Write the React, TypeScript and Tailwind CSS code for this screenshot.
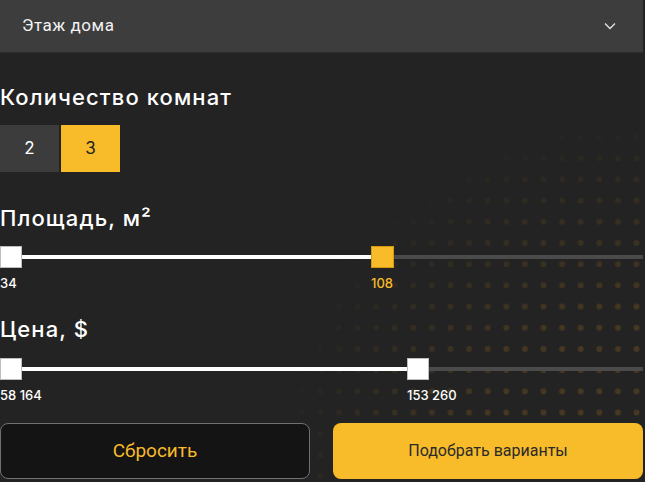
import { useState } from "react";

const rooms = ["2", "3"];

const TRACK = 621; // usable length for the thumb's left edge

type SliderProps = {
  value: number; // 0..1 position of the upper thumb
  fromLabel: string;
  toLabel: string;
  accent?: boolean;
};

function RangeSlider({ value, fromLabel, toLabel, accent }: SliderProps) {
  const left = Math.round(value * TRACK);

  return (
    <div className="flex flex-col gap-[7px]">
      <div className="flex h-[22px] items-center">
        <div className="h-[22px] w-[22px] shrink-0 border border-[#bdbdbd] bg-white" />
        <div className="h-[4px] bg-white" style={{ width: left - 22 }} />
        <div
          className={
            accent
              ? "h-[22px] w-[23px] shrink-0 border border-[#d49a12] bg-[#f8bb2a]"
              : "h-[22px] w-[22px] shrink-0 border border-[#bdbdbd] bg-white"
          }
        />
        <div className="h-[4px] flex-1 bg-[#4a4a4a]" />
      </div>
      <div className="flex font-medium text-[13px] leading-[16px]">
        <span className="shrink-0 text-white" style={{ width: left }}>
          {fromLabel}
        </span>
        <span className={accent ? "text-[#f8bb2a]" : "text-white"}>
          {toLabel}
        </span>
      </div>
    </div>
  );
}

function DotField() {
  return (
    <svg
      className="pointer-events-none absolute inset-0 h-[482px] w-[645px]"
      height="482"
      width="645"
    >
      <defs>
        <pattern
          height="21.2"
          id="dots"
          patternUnits="userSpaceOnUse"
          width="18.6"
          x="627.2"
          y="105.1"
        >
          <circle cx="9.3" cy="10.6" fill="#483921" r="3" />
        </pattern>
        <radialGradient
          cx="645"
          cy="482"
          gradientUnits="userSpaceOnUse"
          id="fade"
          r="400"
        >
          <stop offset="0" stopColor="#fff" stopOpacity="1" />
          <stop offset="0.45" stopColor="#fff" stopOpacity="0.9" />
          <stop offset="0.95" stopColor="#fff" stopOpacity="0" />
        </radialGradient>
        <mask id="fadeMask">
          <rect fill="url(#fade)" height="482" width="645" />
        </mask>
      </defs>
      <rect
        fill="url(#dots)"
        height="482"
        mask="url(#fadeMask)"
        width="645"
        y="60"
      />
    </svg>
  );
}

export default function App() {
  const [room, setRoom] = useState("3");

  return (
    <div className="relative h-[482px] w-[645px] overflow-hidden bg-[#232323] font-['Inter',sans-serif]">
      <DotField />
      <div className="relative flex w-[643px] flex-col">
        <div className="flex h-[53px] items-center justify-between border-[#2b2b2b] border-b bg-[#3d3d3d] pr-[27px] pl-[22px]">
          <span className="font-['Roboto',sans-serif] text-[#f2f2f2] text-[17px] tracking-[0.03em]">
            Этаж дома
          </span>
          <svg fill="none" height="8" viewBox="0 0 12 8" width="12">
            <polyline
              points="1,1.5 6,6.5 11,1.5"
              stroke="#e5e5e5"
              strokeWidth="1.3"
            />
          </svg>
        </div>

        <div className="flex flex-col gap-[14px] pt-[30px]">
          <h2 className="font-medium text-[22px] text-white leading-[28px] tracking-[0.05em]">
            Количество комнат
          </h2>
          <div className="flex gap-[2px]">
            {rooms.map((r) => (
              <button
                className={
                  r === room
                    ? "flex h-[47px] w-[59px] items-center justify-center bg-[#f8bb2a] text-[#222] text-[17px]"
                    : "flex h-[47px] w-[59px] items-center justify-center bg-[#3c3c3c] text-[17px] text-white"
                }
                key={r}
                onClick={() => setRoom(r)}
                type="button"
              >
                {r}
              </button>
            ))}
          </div>
        </div>

        <div className="flex flex-col gap-[14px] pt-[32px]">
          <h2 className="font-medium text-[22px] text-white leading-[28px] tracking-[0.05em]">
            Площадь, м²
          </h2>
          <RangeSlider accent fromLabel="34" toLabel="108" value={0.5974} />
        </div>

        <div className="flex flex-col gap-[15px] pt-[24px]">
          <h2 className="font-medium text-[22px] text-white leading-[28px] tracking-[0.05em]">
            Цена, $
          </h2>
          <RangeSlider fromLabel="58 164" toLabel="153 260" value={0.6554} />
        </div>

        <div className="flex gap-[23px] pt-[20px] font-['Roboto',sans-serif]">
          <button
            className="h-[56px] w-[310px] rounded-[8px] border border-[#707070] bg-[#141414] text-[#f8bb2a] text-[19px]"
            type="button"
          >
            Сбросить
          </button>
          <button
            className="h-[56px] flex-1 rounded-[8px] bg-[#f8bb2a] text-[#2a2a2a] text-[16px]"
            type="button"
          >
            Подобрать варианты
          </button>
        </div>
      </div>
    </div>
  );
}
